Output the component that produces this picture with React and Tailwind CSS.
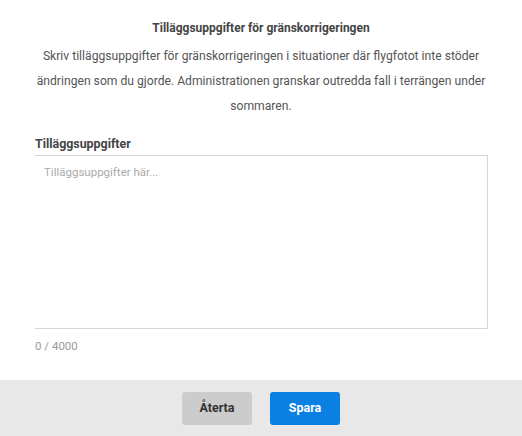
export default function App() {
  return (
    <div className="flex h-[436px] w-[522px] flex-col bg-white font-['Roboto',sans-serif]">
      <div className="flex flex-1 flex-col px-[35px]">
        <h2 className="mt-[19px] text-center text-[12px] font-bold leading-[18px] text-[#444]">
          Tilläggsuppgifter för gränskorrigeringen
        </h2>
        <p className="-mx-[8px] mt-[7px] text-center text-[12.15px] leading-[25px] text-[#555]">
          Skriv tilläggsuppgifter för gränskorrigeringen i situationer där flygfotot inte stöder
          ändringen som du gjorde. Administrationen granskar outredda fall i terrängen under
          sommaren.
        </p>

        <label className="mt-[16px] text-[12.4px] font-bold leading-[18px] text-[#444]">
          Tilläggsuppgifter
        </label>
        <textarea
          placeholder="Tilläggsuppgifter här..."
          className="mt-[2px] h-[174px] w-[453px] resize-none border border-l-0 border-[#d6d6d6] px-[9px] py-[7px] text-[11.5px] leading-[18px] text-[#333] outline-none placeholder:text-[#aaa]"
        />
        <div className="mt-[8px] text-[11.5px] leading-[18px] text-[#999]">0 / 4000</div>
      </div>

      <div className="flex h-[56px] items-center justify-center gap-[18px] bg-[#e8e8e8]">
        <button className="h-[33px] w-[70px] rounded-[3px] bg-[#cccccc] text-[12.5px] font-bold text-[#333]">
          Återta
        </button>
        <button className="h-[33px] w-[70px] rounded-[3px] bg-[#0a80e3] text-[12.5px] font-bold text-white">
          Spara
        </button>
      </div>
    </div>
  );
}
